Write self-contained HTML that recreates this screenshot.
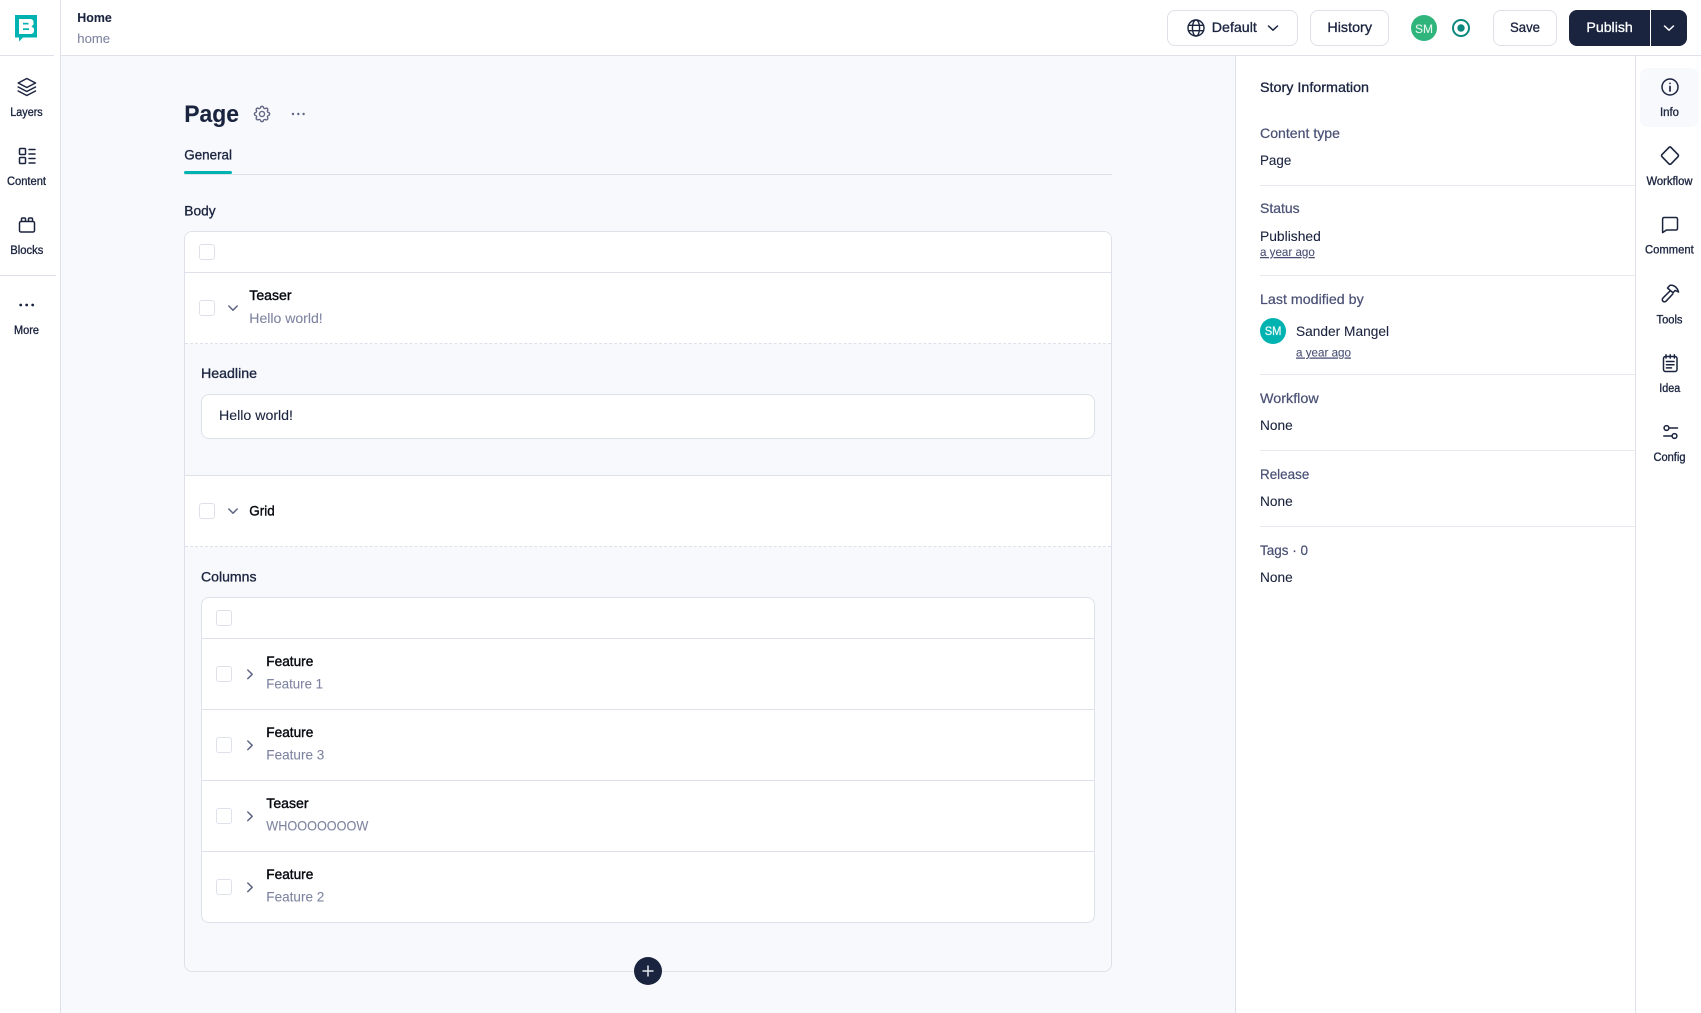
<!DOCTYPE html>
<html lang="en">
<head>
<meta charset="utf-8">
<title>Home</title>
<style>
html,body{margin:0;padding:0;width:1701px;height:1013px;overflow:hidden;background:#fff;font-family:"Liberation Sans",sans-serif}
.b{position:absolute;box-sizing:border-box}
.cb{position:absolute;box-sizing:border-box;width:16px;height:16px;border:1px solid #dfe1ea;border-radius:3px;background:#fff}
.h{position:absolute;height:1px;background:#dfe1ea}
.v{position:absolute;width:1px;background:#dfe1ea}
.btn{position:absolute;box-sizing:border-box;top:10px;height:36px;background:#fff;border:1px solid #dfe1ea;border-radius:8px}
svg.o{position:absolute;left:0;top:0;width:1701px;height:1013px}
text{font-family:"Liberation Sans",sans-serif;font-size:14px;fill:#1b243f;stroke:#1b243f;stroke-width:.1}
.m{stroke:#1b243f;stroke-width:.32}
.k{fill:#06090f;stroke:#06090f;stroke-width:.38}
.g{fill:#7e84a0;stroke:#7e84a0;stroke-width:.08}
.s{fill:#4a5175;stroke:#4a5175;stroke-width:.22}
.t{font-size:11.5px;stroke:#1b243f;stroke-width:.32}
.y{font-size:12px;fill:#4a5175;stroke:#4a5175;stroke-width:.08;text-decoration:underline}
.i{fill:none;stroke:#1b243f;stroke-width:1.5;stroke-linecap:round;stroke-linejoin:round}
.i2{fill:none;stroke:#5f6583;stroke-width:1.5;stroke-linecap:round;stroke-linejoin:round}
</style>
</head>
<body>
<!-- main background -->
<div class="b" style="left:61px;top:56px;width:1175px;height:957px;background:#f8f9fc"></div>
<!-- chrome lines -->
<div class="h" style="left:0;top:55px;width:54px"></div>
<div class="h" style="left:60px;top:55px;width:1641px"></div>
<div class="v" style="left:60px;top:0;height:1013px"></div>
<div class="h" style="left:0;top:275px;width:56px"></div>
<div class="v" style="left:1235px;top:56px;height:957px"></div>
<div class="v" style="left:1635px;top:56px;height:957px"></div>
<!-- right panel dividers -->
<div class="h" style="left:1260px;top:185px;width:375px;background:#e8e9ef"></div>
<div class="h" style="left:1260px;top:275px;width:375px;background:#e8e9ef"></div>
<div class="h" style="left:1260px;top:374px;width:375px;background:#e8e9ef"></div>
<div class="h" style="left:1260px;top:450px;width:375px;background:#e8e9ef"></div>
<div class="h" style="left:1260px;top:526px;width:375px;background:#e8e9ef"></div>
<div class="b" style="left:1640px;top:68px;width:59px;height:59px;background:#f8f9fc;border-radius:8px"></div>
<!-- top buttons -->
<div class="btn" style="left:1167px;width:131px"></div>
<div class="btn" style="left:1310px;width:79px"></div>
<div class="btn" style="left:1493px;width:64px"></div>
<div class="b" style="left:1569px;top:10px;width:118px;height:36px;background:#1b243f;border-radius:8px"></div>
<div class="b" style="left:1650px;top:10px;width:1px;height:36px;background:#fff"></div>
<div class="b" style="left:1411px;top:15px;width:26px;height:26px;border-radius:50%;background:#2fb57c"></div>
<!-- tabs -->
<div class="h" style="left:184px;top:174px;width:928px"></div>
<div class="b" style="left:184px;top:171px;width:48px;height:3px;background:#00b3b0;border-radius:2px"></div>
<!-- outer card -->
<div class="b" style="left:184px;top:231px;width:928px;height:741px;border:1px solid #dfe1ea;border-radius:8px;background:#f8f9fc"></div>
<div class="b" style="left:185px;top:232px;width:926px;height:40px;background:#fff;border-radius:7px 7px 0 0"></div>
<div class="h" style="left:185px;top:272px;width:926px"></div>
<div class="b" style="left:185px;top:273px;width:926px;height:71px;background:#fff;border-bottom:1px dashed #dfe1ea"></div>
<div class="b" style="left:185px;top:344px;width:926px;height:132px;background:#f8f9fc;border-bottom:1px solid #dfe1ea"></div>
<div class="b" style="left:185px;top:476px;width:926px;height:71px;background:#fff;border-bottom:1px dashed #dfe1ea"></div>
<div class="b" style="left:201px;top:394px;width:894px;height:45px;background:#fff;border:1px solid #dfe1ea;border-radius:8px"></div>
<!-- inner card -->
<div class="b" style="left:201px;top:597px;width:894px;height:326px;background:#fff;border:1px solid #dfe1ea;border-radius:8px"></div>
<div class="h" style="left:202px;top:638px;width:892px"></div>
<div class="h" style="left:202px;top:709px;width:892px"></div>
<div class="h" style="left:202px;top:780px;width:892px"></div>
<div class="h" style="left:202px;top:851px;width:892px"></div>
<!-- checkboxes -->
<div class="cb" style="left:199px;top:244px"></div>
<div class="cb" style="left:199px;top:300px"></div>
<div class="cb" style="left:199px;top:503px"></div>
<div class="cb" style="left:216px;top:610px"></div>
<div class="cb" style="left:216px;top:666px"></div>
<div class="cb" style="left:216px;top:737px"></div>
<div class="cb" style="left:216px;top:808px"></div>
<div class="cb" style="left:216px;top:879px"></div>
<!-- plus -->
<div class="b" style="left:634px;top:957px;width:28px;height:28px;border-radius:50%;background:#1b243f"></div>
<div class="b" style="left:1260px;top:318px;width:26px;height:26px;border-radius:50%;background:#00b3b0"></div>

<svg class="o" viewBox="0 0 1701 1013" xmlns="http://www.w3.org/2000/svg">
<!-- logo mark -->
<path d="M15 15H37V37.5H23L19 41.5V37.5H15Z" fill="#00b3b0"/>
<path d="M19 19H30.5a3 3 0 0 1 3 3V24.5L31.5 26.4L34 28.5V31a3 3 0 0 1-3 3H19Z" fill="#fff"/>
<rect x="23" y="22.8" width="5.5" height="1.7" fill="#00b3b0"/>
<rect x="23" y="28.3" width="6" height="1.7" fill="#00b3b0"/>

<!-- left icons -->
<path class="i" d="M26.8 78.5L35.5 83L26.8 87.5L18.2 83Z"/>
<path class="i" d="M18.2 87L26.8 91.5L35.5 87"/>
<path class="i" d="M18.2 91L26.8 95.5L35.5 91"/>
<rect class="i" x="19.5" y="148.5" width="6" height="6" rx="1"/>
<rect class="i" x="19.5" y="157.5" width="6" height="6" rx="1"/>
<path class="i" d="M29 149.5H35M29 154H35M29 158.5H35M29 163H35"/>
<rect class="i" x="19.5" y="221.5" width="15" height="10.5" rx="1.5"/>
<path class="i" d="M21.5 221V219a1 1 0 0 1 1-1h2a1 1 0 0 1 1 1v2M28.5 221V219a1 1 0 0 1 1-1h2a1 1 0 0 1 1 1v2"/>
<g fill="#1b243f"><circle cx="20.7" cy="305" r="1.4"/><circle cx="26.7" cy="305" r="1.4"/><circle cx="32.7" cy="305" r="1.4"/></g>

<text class="t" x="10.3" y="116" textLength="32.4" lengthAdjust="spacingAndGlyphs">Layers</text>
<text class="t" x="7" y="185" textLength="39" lengthAdjust="spacingAndGlyphs">Content</text>
<text class="t" x="10.3" y="254" textLength="33" lengthAdjust="spacingAndGlyphs">Blocks</text>
<text class="t" x="14" y="334" textLength="25" lengthAdjust="spacingAndGlyphs">More</text>

<!-- breadcrumb -->
<text x="77.3" y="22" textLength="34.5" lengthAdjust="spacingAndGlyphs" style="font-size:13px;font-weight:700">Home</text>
<text class="g" x="77.3" y="43" textLength="32.7" lengthAdjust="spacingAndGlyphs" style="font-size:13px">home</text>

<!-- title -->
<text x="184.3" y="122" textLength="54.7" lengthAdjust="spacingAndGlyphs" style="font-size:24px;font-weight:700">Page</text>
<g transform="translate(251.8 103.8) scale(.85)"><path class="i2" style="stroke-width:1.6" d="M10.325 4.317c.426 -1.756 2.924 -1.756 3.35 0a1.724 1.724 0 0 0 2.573 1.066c1.543 -.94 3.31 .826 2.37 2.37a1.724 1.724 0 0 0 1.065 2.572c1.756 .426 1.756 2.924 0 3.35a1.724 1.724 0 0 0 -1.066 2.573c.94 1.543 -.826 3.31 -2.37 2.37a1.724 1.724 0 0 0 -2.572 1.065c-.426 1.756 -2.924 1.756 -3.35 0a1.724 1.724 0 0 0 -2.573 -1.066c-1.543 .94 -3.31 -.826 -2.37 -2.37a1.724 1.724 0 0 0 -1.065 -2.572c-1.756 -.426 -1.756 -2.924 0 -3.35a1.724 1.724 0 0 0 1.066 -2.573c-.94 -1.543 .826 -3.31 2.37 -2.37c1 .608 2.296 .07 2.572 -1.065z"/><circle class="i2" style="stroke-width:1.6" cx="12" cy="12" r="3"/></g>
<g fill="#5f6583"><circle cx="293" cy="114" r="1.2"/><circle cx="298.3" cy="114" r="1.2"/><circle cx="303.6" cy="114" r="1.2"/></g>
<text class="m" x="184.3" y="159.5" textLength="47.7" lengthAdjust="spacingAndGlyphs">General</text>
<text class="m" x="184.3" y="215.5" textLength="31.3" lengthAdjust="spacingAndGlyphs">Body</text>

<!-- teaser -->
<path class="i2" d="M228.8 306L233 310.2L237.2 306"/>
<text class="k" x="249.3" y="300" textLength="42.3" lengthAdjust="spacingAndGlyphs">Teaser</text>
<text class="g" x="249.3" y="323" textLength="73.4" lengthAdjust="spacingAndGlyphs">Hello world!</text>
<text class="m" x="201" y="378" textLength="56" lengthAdjust="spacingAndGlyphs">Headline</text>
<text x="219" y="420" textLength="74" lengthAdjust="spacingAndGlyphs">Hello world!</text>

<!-- grid -->
<path class="i2" d="M228.8 509L233 513.2L237.2 509"/>
<text class="k" x="249.3" y="515.5" textLength="25.4" lengthAdjust="spacingAndGlyphs">Grid</text>
<text class="m" x="201" y="581.5" textLength="55.5" lengthAdjust="spacingAndGlyphs">Columns</text>

<!-- column rows -->
<path class="i2" d="M247.8 670L252.2 674.3L247.8 678.6"/>
<path class="i2" d="M247.8 741L252.2 745.3L247.8 749.6"/>
<path class="i2" d="M247.8 812L252.2 816.3L247.8 820.6"/>
<path class="i2" d="M247.8 883L252.2 887.3L247.8 891.6"/>
<text class="k" x="266.3" y="666" textLength="47" lengthAdjust="spacingAndGlyphs">Feature</text>
<text class="g" x="266.3" y="688.5" textLength="56.7" lengthAdjust="spacingAndGlyphs">Feature 1</text>
<text class="k" x="266.3" y="737" textLength="47" lengthAdjust="spacingAndGlyphs">Feature</text>
<text class="g" x="266.3" y="759.5" textLength="58" lengthAdjust="spacingAndGlyphs">Feature 3</text>
<text class="k" x="266.3" y="808" textLength="42.3" lengthAdjust="spacingAndGlyphs">Teaser</text>
<text class="g" x="266.3" y="830.5" textLength="102" lengthAdjust="spacingAndGlyphs">WHOOOOOOOW</text>
<text class="k" x="266.3" y="879" textLength="47" lengthAdjust="spacingAndGlyphs">Feature</text>
<text class="g" x="266.3" y="901.5" textLength="58" lengthAdjust="spacingAndGlyphs">Feature 2</text>

<!-- plus glyph -->
<path d="M642.5 971H653.5M648 965.5V976.5" stroke="#e4e6ee" stroke-width="1.5" fill="none"/>

<!-- header right -->
<g class="i" style="stroke-width:1.4"><circle cx="1196" cy="28" r="8"/><ellipse cx="1196" cy="28" rx="3.6" ry="8"/><path d="M1188.5 25.3H1203.5M1188.5 30.7H1203.5"/></g>
<text class="m" x="1211.8" y="32" textLength="45" lengthAdjust="spacingAndGlyphs">Default</text>
<path class="i" d="M1268.5 26L1273 30.2L1277.5 26"/>
<text class="m" x="1327.4" y="32" textLength="44.6" lengthAdjust="spacingAndGlyphs">History</text>
<text x="1415" y="33" textLength="18" lengthAdjust="spacingAndGlyphs" style="font-size:12px;fill:#e8f7f0;stroke:#e8f7f0">SM</text>
<circle cx="1461" cy="28" r="8" fill="none" stroke="#0d8a80" stroke-width="2"/>
<circle cx="1461" cy="28" r="3.7" fill="#0d8a80"/>
<text class="m" x="1510" y="32" textLength="30" lengthAdjust="spacingAndGlyphs">Save</text>
<text x="1586.4" y="32" textLength="46.4" lengthAdjust="spacingAndGlyphs" style="fill:#fff;stroke:#fff;stroke-width:.3">Publish</text>
<path d="M1664.5 26L1669 30.2L1673.5 26" fill="none" stroke="#fff" stroke-width="1.5" stroke-linecap="round" stroke-linejoin="round"/>

<!-- story info -->
<text class="m" x="1260" y="92" textLength="109" lengthAdjust="spacingAndGlyphs">Story Information</text>
<text class="s" x="1260" y="138" textLength="80" lengthAdjust="spacingAndGlyphs">Content type</text>
<text x="1260" y="165" textLength="31.3" lengthAdjust="spacingAndGlyphs">Page</text>
<text class="s" x="1260" y="213" textLength="39.7" lengthAdjust="spacingAndGlyphs">Status</text>
<text x="1260" y="241" textLength="60.8" lengthAdjust="spacingAndGlyphs">Published</text>
<text class="y" x="1260" y="256" textLength="54.8" lengthAdjust="spacingAndGlyphs">a year ago</text>
<text class="s" x="1260" y="304" textLength="103.7" lengthAdjust="spacingAndGlyphs">Last modified by</text>
<text x="1264.7" y="335" textLength="16.7" lengthAdjust="spacingAndGlyphs" style="font-size:12px;fill:#e8f9f8;stroke:#e8f9f8;stroke-width:.3">SM</text>
<text x="1296" y="336" textLength="93" lengthAdjust="spacingAndGlyphs">Sander Mangel</text>
<text class="y" x="1296" y="356.5" textLength="55" lengthAdjust="spacingAndGlyphs">a year ago</text>
<text class="s" x="1260" y="403" textLength="58.7" lengthAdjust="spacingAndGlyphs">Workflow</text>
<text x="1260" y="430" textLength="32.7" lengthAdjust="spacingAndGlyphs">None</text>
<text class="s" x="1260" y="479" textLength="49.3" lengthAdjust="spacingAndGlyphs">Release</text>
<text x="1260" y="506" textLength="32.7" lengthAdjust="spacingAndGlyphs">None</text>
<text class="s" x="1260" y="555" textLength="48" lengthAdjust="spacingAndGlyphs">Tags · 0</text>
<text x="1260" y="582" textLength="32.7" lengthAdjust="spacingAndGlyphs">None</text>

<!-- right icons -->
<circle class="i" cx="1670" cy="87" r="8"/>
<path class="i" d="M1670 83.3V83.4M1670 86.5V91" style="stroke-width:1.7"/>
<path class="i" d="M1669 147.4a1.5 1.5 0 0 1 2 0L1678 154.6a1.5 1.5 0 0 1 0 2.1L1671 163.9a1.5 1.5 0 0 1-2 0L1662 156.7a1.5 1.5 0 0 1 0-2.1Z" style="stroke-width:1.6"/>
<path class="i" d="M1662.6 232.6V219a1.5 1.5 0 0 1 1.5-1.5H1676a1.5 1.5 0 0 1 1.5 1.5v9.5a1.5 1.5 0 0 1-1.5 1.5H1666.5Z"/>
<path class="i" d="M1667.5 288L1670 285.2H1672C1675 285.6 1677.8 288.5 1678.6 292L1675.2 290.4L1673 292.8Z"/>
<path class="i" d="M1670 291L1662.8 298.2a2.2 2.2 0 0 0 3.1 3.1L1672.8 294"/>
<rect class="i" x="1663.5" y="356.5" width="13.5" height="15" rx="2"/>
<path class="i" d="M1666 354.8V358M1670.2 354.8V358M1674.4 354.8V358M1666.4 361.5H1674M1666.4 364.7H1674M1666.4 367.9H1671.5"/>
<circle class="i" cx="1666.5" cy="428" r="2.4"/>
<path class="i" d="M1669.5 428H1677.5M1663.8 436H1671.5"/>
<circle class="i" cx="1674.5" cy="436" r="2.4"/>

<text class="t" x="1660" y="116" textLength="19" lengthAdjust="spacingAndGlyphs">Info</text>
<text class="t" x="1646.5" y="185" textLength="46" lengthAdjust="spacingAndGlyphs">Workflow</text>
<text class="t" x="1645" y="253.5" textLength="48.7" lengthAdjust="spacingAndGlyphs">Comment</text>
<text class="t" x="1656.5" y="323.5" textLength="26" lengthAdjust="spacingAndGlyphs">Tools</text>
<text class="t" x="1659.3" y="392" textLength="21" lengthAdjust="spacingAndGlyphs">Idea</text>
<text class="t" x="1653.5" y="461" textLength="32" lengthAdjust="spacingAndGlyphs">Config</text>
</svg>
</body>
</html>
